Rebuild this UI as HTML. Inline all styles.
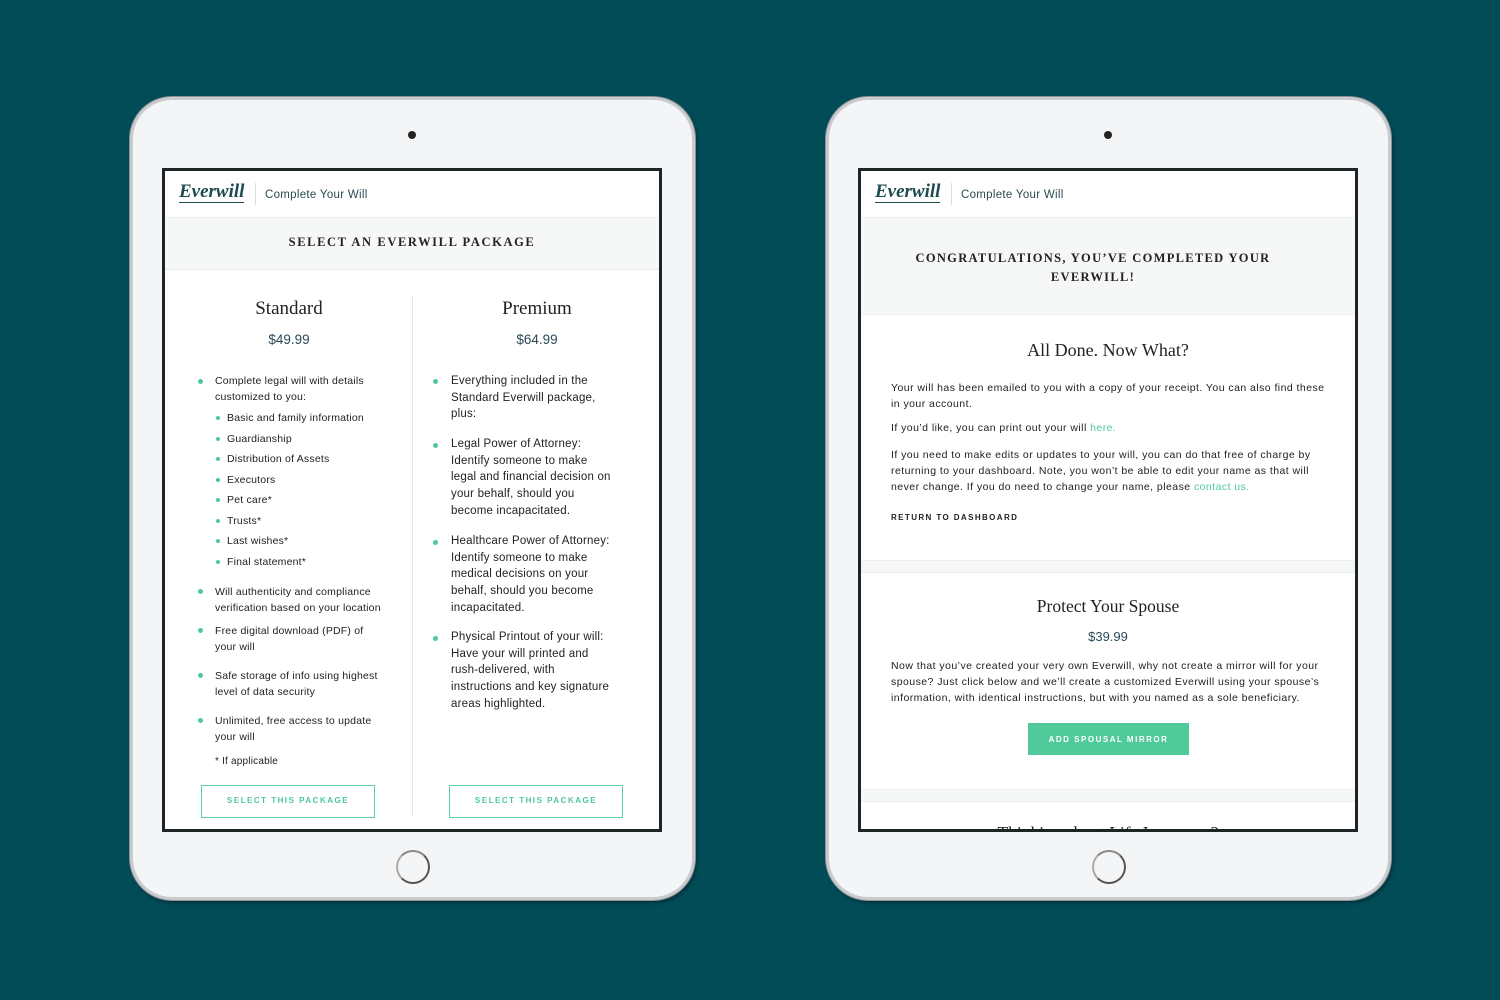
<!DOCTYPE html>
<html><head><meta charset="utf-8"><style>
*{margin:0;padding:0;box-sizing:border-box}
body{width:1500px;height:1000px;background:#024c58;position:relative;overflow:hidden;font-family:"Liberation Sans",sans-serif;color:#222}
.pad{position:absolute;top:97px;width:565px;height:803px;background:#f4f5f7;border-radius:42px;border:3px solid #c9cbce;box-shadow:0 0 0 1px #8e9296, 2px 3px 4px rgba(0,0,0,.35)}
.cam{position:absolute;width:8px;height:8px;border-radius:50%;background:#222;top:31px}
.home{position:absolute;width:34px;height:34px;border-radius:50%;border:2px solid #555;top:750px;border-left-color:#aaa;border-top-color:#888}
.scr{position:absolute;top:168px;width:500px;height:664px;background:#fff;border:3px solid #1e2426;overflow:hidden}
.a{position:absolute;white-space:nowrap}
.logo{font-family:"Liberation Serif",serif;font-style:italic;font-weight:bold;font-size:19px;color:#1d4b50;left:14px;top:11px;border-bottom:1.5px solid #1d4b50;line-height:20px}
.sep{position:absolute;left:90px;top:12px;width:1px;height:22px;background:#ddd}
.cyw{left:100px;top:18px;font-size:11.5px;color:#2a4a50;letter-spacing:.3px}
.band{position:absolute;left:0;right:0;background:#f6f7f7;border-top:1px solid #eee;border-bottom:1px solid #eee}
.ttl{font-family:"Liberation Serif",serif;font-weight:bold;letter-spacing:1.6px;font-size:12.5px;color:#222;text-align:center;width:100%;left:0}
.h{font-family:"Liberation Serif",serif;font-size:19px;color:#222;text-align:center}
.pr{font-size:13.5px;color:#2a4a55;text-align:center}
.t{font-size:10.5px;color:#222;letter-spacing:.2px}
.t2{font-size:11.5px;color:#222;letter-spacing:.2px}
.r .t{letter-spacing:.45px}
.d{position:absolute;width:5px;height:5px;border-radius:50%;background:#4fc89a}
.btn{position:absolute;border:1.5px solid #5bcfa4;color:#4fc89a;font-size:8px;font-weight:bold;letter-spacing:1.5px;text-align:center;line-height:30px}
.g{color:#4fc89a}
</style></head><body>

<div class="pad" style="left:130px"><div class="cam" style="left:275px"></div><div class="home" style="left:263px"></div></div>
<div class="pad" style="left:826px"><div class="cam" style="left:275px"></div><div class="home" style="left:263px"></div></div>

<!-- LEFT SCREEN -->
<div class="scr" style="left:162px">
 <div class="a logo">Everwill</div><div class="sep"></div><div class="a cyw">Complete Your Will</div>
 <div class="band" style="top:46px;height:53px"></div>
 <div class="a ttl" style="top:64px">SELECT AN EVERWILL PACKAGE</div>
 <div style="position:absolute;left:247px;top:124px;width:1px;height:522px;background:#e6e6e6"></div>
 <div class="a h" style="left:0;width:248px;top:127px">Standard</div>
 <div class="a pr" style="left:0;width:248px;top:161px">$49.99</div>
 <div class="a h" style="left:248px;width:248px;top:127px">Premium</div>
 <div class="a pr" style="left:248px;width:248px;top:161px">$64.99</div>

 <div class="d" style="left:33px;top:208px"></div><div class="a t" style="left:50px;top:202px;line-height:16px">Complete legal will with details<br>customized to you:</div>
 <div class="d" style="left:51px;top:245px;width:4px;height:4px"></div><div class="a t" style="left:62px;top:241px">Basic and family information</div>
 <div class="d" style="left:51px;top:266px;width:4px;height:4px"></div><div class="a t" style="left:62px;top:262px">Guardianship</div>
 <div class="d" style="left:51px;top:286px;width:4px;height:4px"></div><div class="a t" style="left:62px;top:282px">Distribution of Assets</div>
 <div class="d" style="left:51px;top:307px;width:4px;height:4px"></div><div class="a t" style="left:62px;top:303px">Executors</div>
 <div class="d" style="left:51px;top:327px;width:4px;height:4px"></div><div class="a t" style="left:62px;top:323px">Pet care*</div>
 <div class="d" style="left:51px;top:348px;width:4px;height:4px"></div><div class="a t" style="left:62px;top:344px">Trusts*</div>
 <div class="d" style="left:51px;top:368px;width:4px;height:4px"></div><div class="a t" style="left:62px;top:364px">Last wishes*</div>
 <div class="d" style="left:51px;top:389px;width:4px;height:4px"></div><div class="a t" style="left:62px;top:385px">Final statement*</div>
 <div class="d" style="left:33px;top:418px"></div><div class="a t" style="left:50px;top:413px;line-height:16px">Will authenticity and compliance<br>verification based on your location</div>
 <div class="d" style="left:33px;top:457px"></div><div class="a t" style="left:50px;top:452px;line-height:16px">Free digital download (PDF) of<br>your will</div>
 <div class="d" style="left:33px;top:502px"></div><div class="a t" style="left:50px;top:497px;line-height:16px">Safe storage of info using highest<br>level of data security</div>
 <div class="d" style="left:33px;top:547px"></div><div class="a t" style="left:50px;top:542px;line-height:16px">Unlimited, free access to update<br>your will</div>
 <div class="a t" style="left:50px;top:585px;font-size:10px">* If applicable</div>
 <div class="btn" style="left:36px;top:614px;width:174px;height:33px">SELECT THIS PACKAGE</div>

 <div class="d" style="left:268px;top:208px"></div><div class="a t2" style="left:286px;top:202px;line-height:16.7px">Everything included in the<br>Standard Everwill package,<br>plus:</div>
 <div class="d" style="left:268px;top:272px"></div><div class="a t2" style="left:286px;top:265px;line-height:16.7px">Legal Power of Attorney:<br>Identify someone to make<br>legal and financial decision on<br>your behalf, should you<br>become incapacitated.</div>
 <div class="d" style="left:268px;top:369px"></div><div class="a t2" style="left:286px;top:362px;line-height:16.7px">Healthcare Power of Attorney:<br>Identify someone to make<br>medical decisions on your<br>behalf, should you become<br>incapacitated.</div>
 <div class="d" style="left:268px;top:465px"></div><div class="a t2" style="left:286px;top:458px;line-height:16.7px">Physical Printout of your will:<br>Have your will printed and<br>rush-delivered, with<br>instructions and key signature<br>areas highlighted.</div>
 <div class="btn" style="left:284px;top:614px;width:174px;height:33px">SELECT THIS PACKAGE</div>
</div>

<!-- RIGHT SCREEN -->
<div class="scr r" style="left:858px">
 <div class="a logo">Everwill</div><div class="sep"></div><div class="a cyw">Complete Your Will</div>
 <div class="band" style="top:46px;height:98px"></div>
 <div class="a ttl" style="top:78px;line-height:18.5px;letter-spacing:1.3px;left:-15px">CONGRATULATIONS, YOU’VE COMPLETED YOUR<br>EVERWILL!</div>
 <div class="a h" style="left:0;width:494px;top:169px;font-size:18px">All Done. Now What?</div>
 <div class="a t" style="left:30px;top:209px;line-height:16px">Your will has been emailed to you with a copy of your receipt. You can also find these<br>in your account.</div>
 <div class="a t" style="left:30px;top:251px">If you’d like, you can print out your will <span class="g">here.</span></div>
 <div class="a t" style="left:30px;top:276px;line-height:16px">If you need to make edits or updates to your will, you can do that free of charge by<br>returning to your dashboard. Note, you won’t be able to edit your name as that will<br>never change. If you do need to change your name, please <span class="g">contact us.</span></div>
 <div class="a" style="left:30px;top:342px;font-size:8px;font-weight:bold;letter-spacing:1.4px">RETURN TO DASHBOARD</div>
 <div class="band" style="top:389px;height:13px"></div>
 <div class="a h" style="left:0;width:494px;top:425px;font-size:17.5px">Protect Your Spouse</div>
 <div class="a pr" style="left:0;width:494px;top:458px;font-size:13px">$39.99</div>
 <div class="a t" style="left:30px;top:487px;line-height:16px">Now that you’ve created your very own Everwill, why not create a mirror will for your<br>spouse? Just click below and we’ll create a customized Everwill using your spouse’s<br>information, with identical instructions, but with you named as a sole beneficiary.</div>
 <div class="a" style="left:167px;top:552px;width:161px;height:32px;background:#50c99b;color:#fff;font-size:8px;font-weight:bold;letter-spacing:1.5px;text-align:center;line-height:34px">ADD SPOUSAL MIRROR</div>
 <div class="band" style="top:618px;height:13px"></div>
 <div class="a h" style="left:0;width:494px;top:652px;font-size:17.5px">Thinking about Life Insurance?</div>
</div>
</body></html>
